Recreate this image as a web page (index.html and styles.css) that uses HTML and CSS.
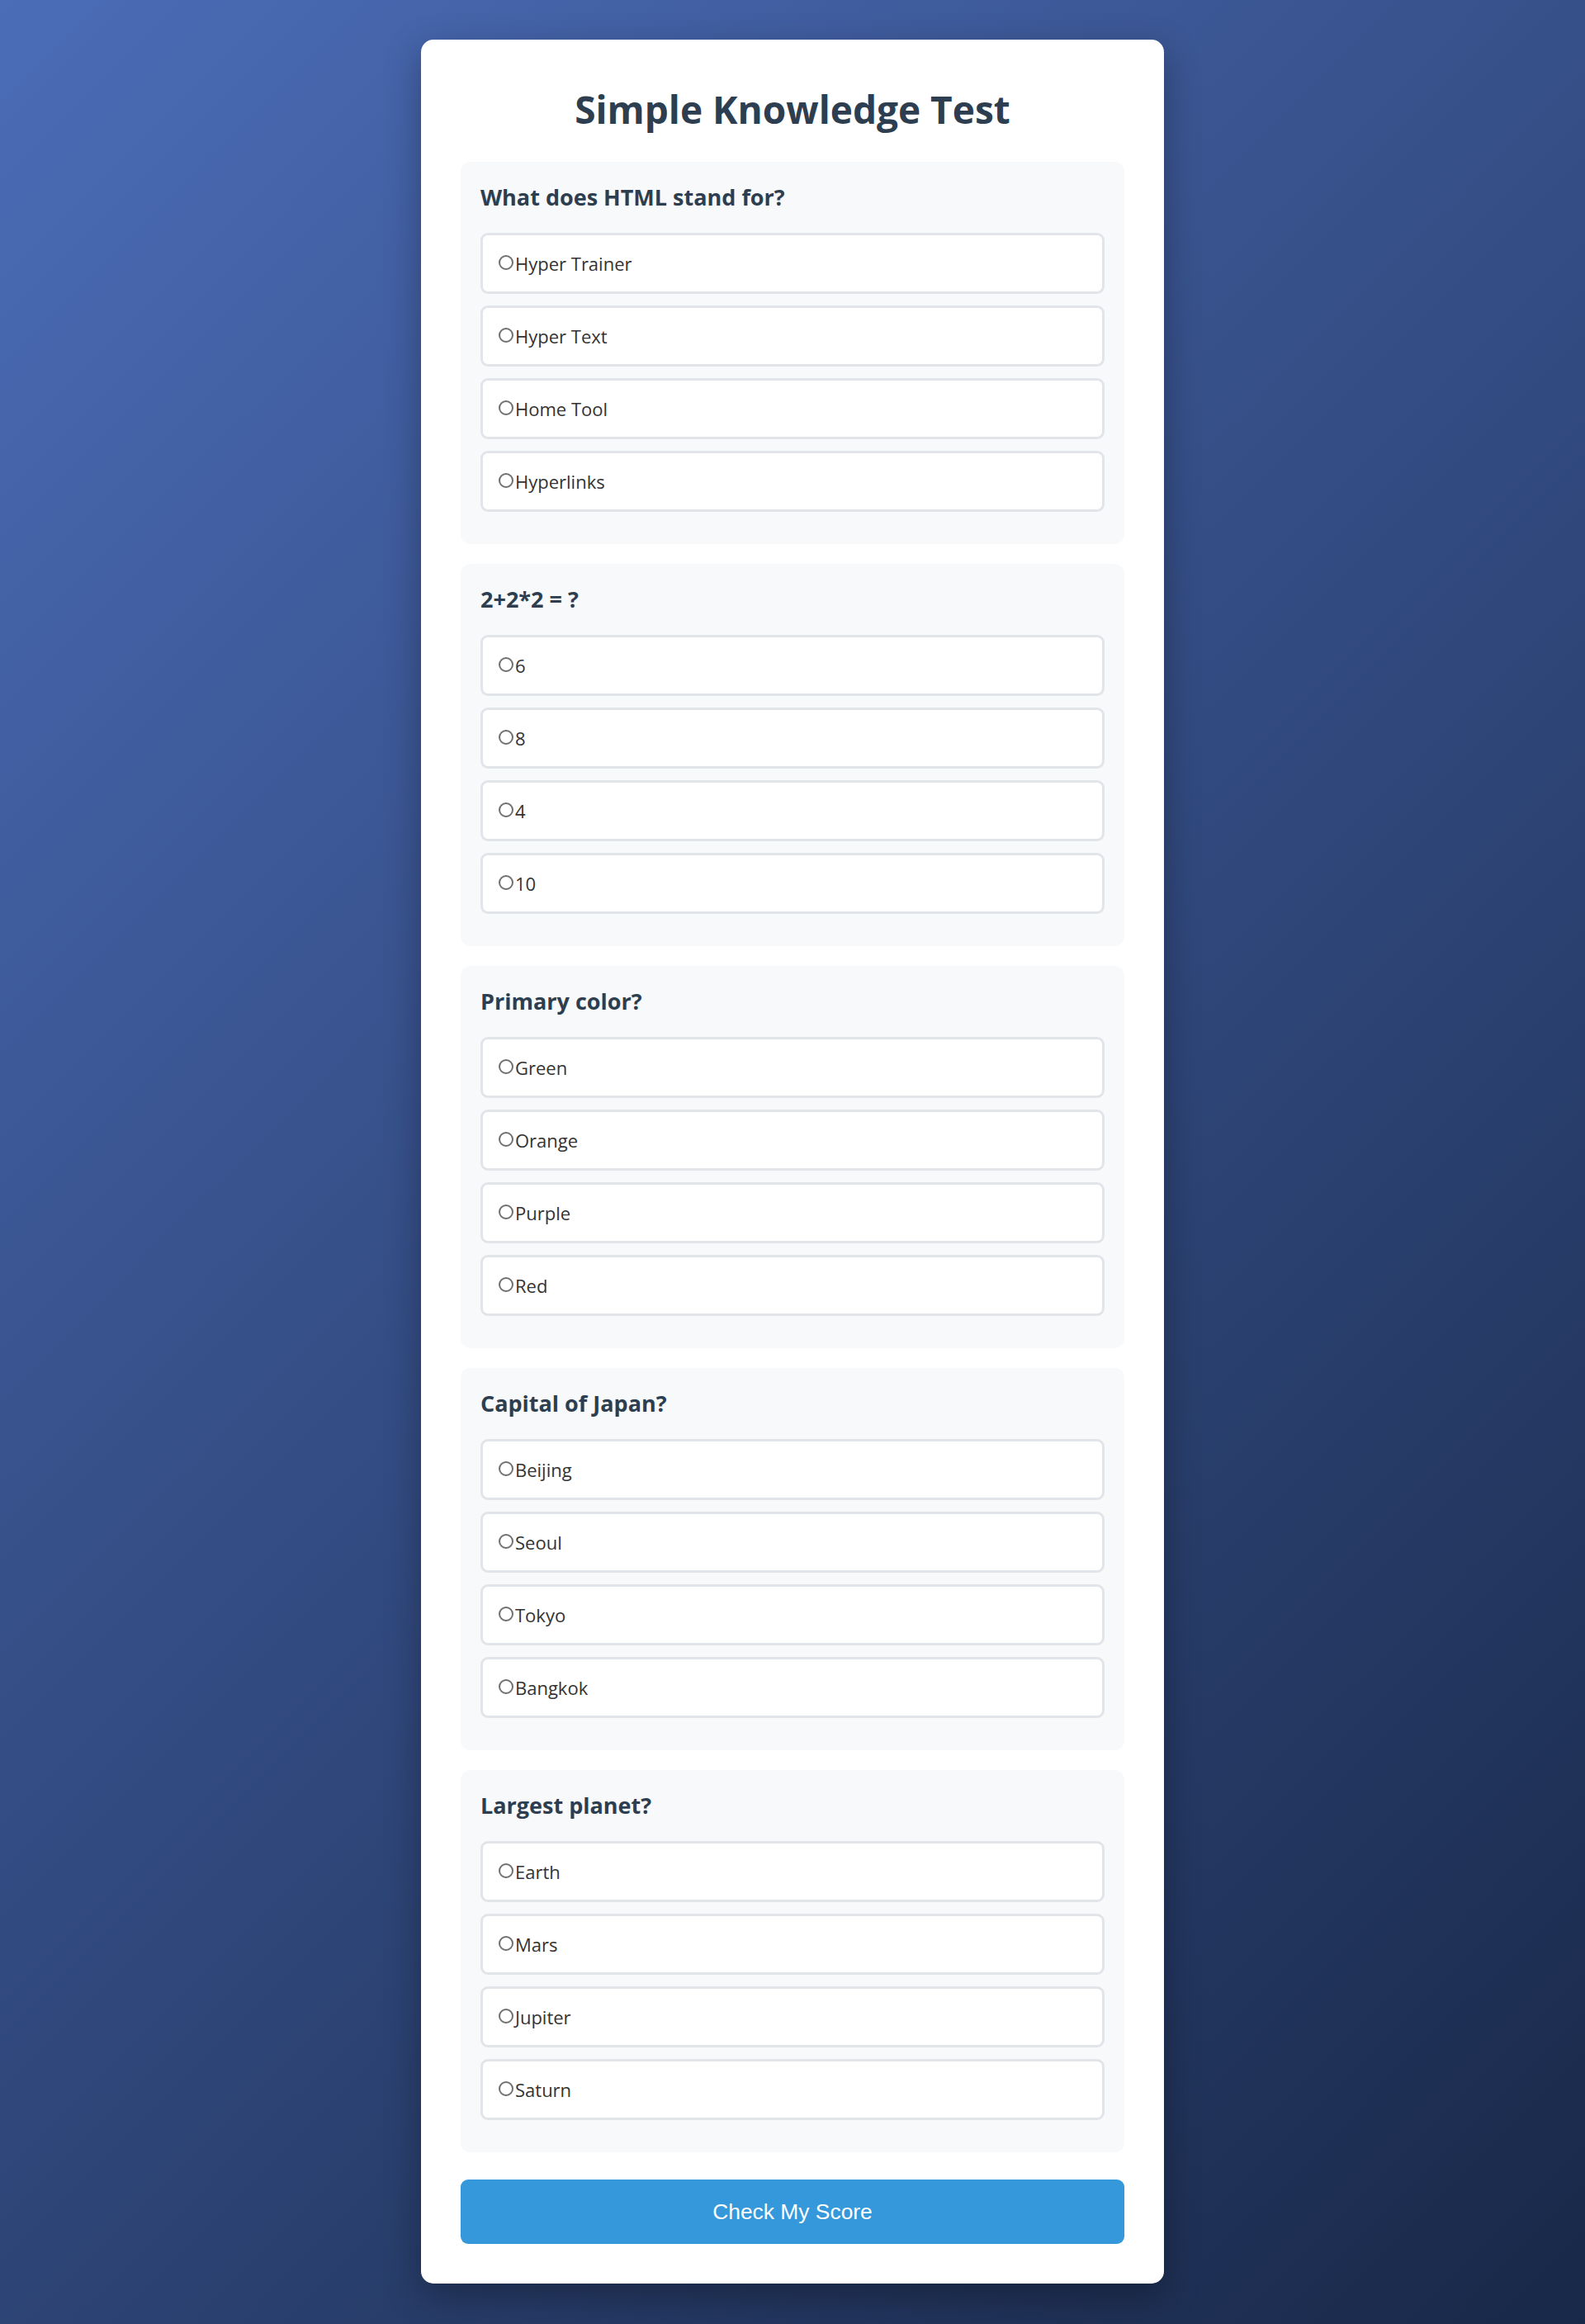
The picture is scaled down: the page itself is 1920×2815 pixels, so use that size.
FILE: index.html
```html
<!DOCTYPE html>
<html lang="en">
<head>
<meta charset="utf-8">
<title>Simple Knowledge Test</title>
<link rel="stylesheet" href="styles.css">
</head>
<body>
<div class="container">
  <h1 class="title">Simple Knowledge Test</h1>
  <form class="quiz">
    <div class="question">
      <h3 class="q-text">What does HTML stand for?</h3>
      <label class="option"><input type="radio" name="q1" class="radio">Hyper Trainer</label>
      <label class="option"><input type="radio" name="q1" class="radio">Hyper Text</label>
      <label class="option"><input type="radio" name="q1" class="radio">Home Tool</label>
      <label class="option"><input type="radio" name="q1" class="radio">Hyperlinks</label>
    </div>
    <div class="question">
      <h3 class="q-text">2+2*2 = ?</h3>
      <label class="option"><input type="radio" name="q2" class="radio">6</label>
      <label class="option"><input type="radio" name="q2" class="radio">8</label>
      <label class="option"><input type="radio" name="q2" class="radio">4</label>
      <label class="option"><input type="radio" name="q2" class="radio">10</label>
    </div>
    <div class="question">
      <h3 class="q-text">Primary color?</h3>
      <label class="option"><input type="radio" name="q3" class="radio">Green</label>
      <label class="option"><input type="radio" name="q3" class="radio">Orange</label>
      <label class="option"><input type="radio" name="q3" class="radio">Purple</label>
      <label class="option"><input type="radio" name="q3" class="radio">Red</label>
    </div>
    <div class="question">
      <h3 class="q-text">Capital of Japan?</h3>
      <label class="option"><input type="radio" name="q4" class="radio">Beijing</label>
      <label class="option"><input type="radio" name="q4" class="radio">Seoul</label>
      <label class="option"><input type="radio" name="q4" class="radio">Tokyo</label>
      <label class="option"><input type="radio" name="q4" class="radio">Bangkok</label>
    </div>
    <div class="question">
      <h3 class="q-text">Largest planet?</h3>
      <label class="option"><input type="radio" name="q5" class="radio">Earth</label>
      <label class="option"><input type="radio" name="q5" class="radio">Mars</label>
      <label class="option"><input type="radio" name="q5" class="radio">Jupiter</label>
      <label class="option"><input type="radio" name="q5" class="radio">Saturn</label>
    </div>
    <button type="button" class="submit">Check My Score</button>
  </form>
</div>
</body>
</html>
```
FILE: styles.css
```css
* {
  box-sizing: border-box;
}

html {
  background: #182848;
}

body {
  margin: 0;
  padding: 48px;
  min-height: 100vh;
  font-family: "Open Sans", "Noto Sans", sans-serif;
  background: linear-gradient(135deg, #4b6cb7 0%, #182848 100%);
}

.container {
  max-width: 900px;
  margin: 0 auto;
  background: #ffffff;
  border-radius: 15px;
  padding: 48px;
  box-shadow: 0 15px 45px rgba(0, 0, 0, 0.3);
}

.title {
  margin: 0 0 28px;
  text-align: center;
  color: #2c3e50;
  font-size: 46px;
  font-weight: 700;
  line-height: 72px;
}

.quiz {
  display: flex;
  flex-direction: column;
  gap: 24px;
}

.question {
  background: #f8f9fa;
  border-radius: 12px;
  padding: 24px 24px 25px;
}

.q-text {
  margin: 0 0 24px;
  color: #2c3e50;
  font-size: 27px;
  font-weight: 700;
  line-height: 38px;
}

.option {
  display: block;
  background: #ffffff;
  border: 3px solid #e1e5e9;
  border-radius: 9px;
  padding: 18px;
  margin-bottom: 14px;
  font-size: 22px;
  line-height: 32px;
  color: #333333;
}

.radio {
  appearance: none;
  -webkit-appearance: none;
  display: inline-block;
  width: 18px;
  height: 18px;
  margin: 0 2px 1px 1px;
  border: 2px solid #707070;
  border-radius: 50%;
  background: #ffffff;
  vertical-align: baseline;
}

.submit {
  margin-top: 9px;
  width: 100%;
  padding: 24px;
  border: none;
  border-radius: 9px;
  background: #3498db;
  color: #ffffff;
  font-family: "Liberation Sans", Arial, sans-serif;
  font-size: 26.4px;
  line-height: 30px;
  cursor: pointer;
}
```
